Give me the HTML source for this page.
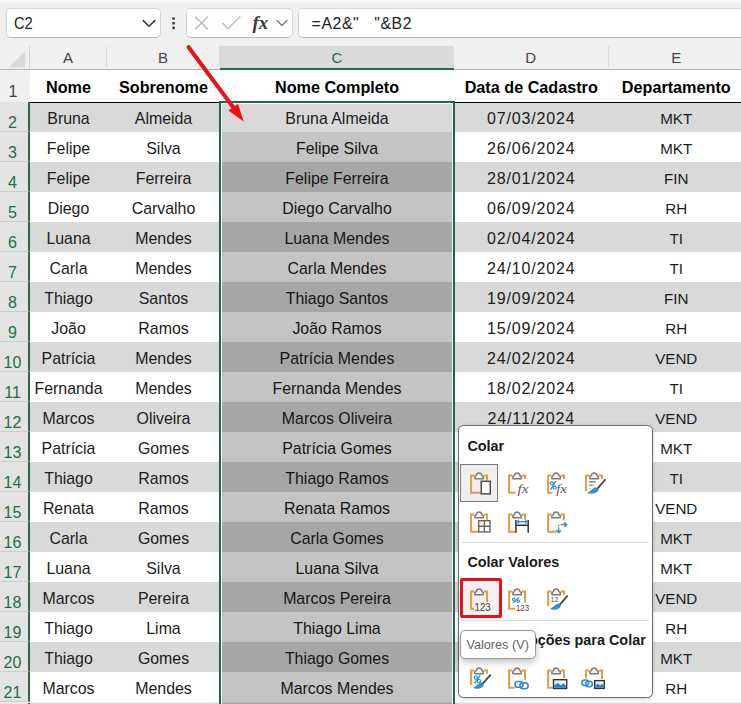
<!DOCTYPE html>
<html lang="pt-BR"><head><meta charset="utf-8"><title>Excel - Colar Valores</title>
<style>
*{box-sizing:border-box;margin:0;padding:0}
html,body{width:741px;height:704px;overflow:hidden;background:#f0f0f0;font-family:"Liberation Sans",sans-serif;color:#1a1a1a}
#app{position:relative;width:741px;height:704px;overflow:hidden;background:#f0f0f0}
.abs{position:absolute}
.topfade{left:0;top:0;width:741px;height:4px;background:linear-gradient(#fafafa,#f0f0f0)}
.fbox{position:absolute;top:8px;height:30px;background:#fff;border:1px solid #d6d6d6;border-bottom-color:#b9b9b9;border-radius:5px}
.namebox{left:6px;width:155px}
.namebox span{position:absolute;left:6.6px;top:0;line-height:29px;font-size:16.6px;color:#222;transform:scaleX(.885);transform-origin:0 50%}
.btnbox{left:186px;width:107px}
.formula{left:298px;width:460px}
.formula span{position:absolute;left:12.6px;top:0;line-height:29px;font-size:15.8px;color:#222;white-space:pre;letter-spacing:.6px}
.colhead{position:absolute;top:46px;height:24px;font-size:15px;line-height:24px;text-align:center;color:#444;border-bottom:1px solid #b4b4b4;border-right:1px solid #dbdbdb;background:#f0f0f0}
.colhead.sel{background:#dadada;color:#1f6e43;border-bottom:2px solid #2a6a47;border-right:none}
.rowhead{position:absolute;left:0;width:30px;font-size:16px;text-align:center;color:#444;background:#f0f0f0;border-bottom:1px solid #cdcdcd;padding-right:4px}
.rowhead.sel{background:#e3e3e3;color:#1f6e43;border-right:2px solid #2a6a47;padding-right:3px;width:30px}
.row{position:absolute;left:30px;width:711px;height:30px;background:#fff}
.row.g{background:#d9d9d9}
.cell{position:absolute;top:2px;height:30px;line-height:30px;font-size:15.9px;text-align:center;white-space:nowrap;color:#1c1c1c}
.cell.d{font-size:16px;letter-spacing:.85px}
.cell.e{font-size:15.2px}
.hdr .cell{font-weight:bold;font-size:16.2px;letter-spacing:0;color:#000;line-height:34.5px;height:33px;top:0}
.selov{position:absolute;background:rgba(0,0,0,.23)}
</style></head><body><div id="app">
<div class="abs topfade"></div>

<div class="fbox namebox"><span>C2</span>
<svg class="abs" style="left:134px;top:8px" width="16" height="12" viewBox="0 0 16 12"><path d="M2.2 3.6 L8 9.2 L13.8 3.6" fill="none" stroke="#333" stroke-width="1.5" stroke-linecap="round" stroke-linejoin="round"/></svg></div>
<svg class="abs" style="left:170px;top:15px" width="8" height="16" viewBox="0 0 8 16"><g fill="#444"><rect x="2.3" y="2.2" width="2.6" height="2.6" rx=".6"/><rect x="2.3" y="6.9" width="2.6" height="2.6" rx=".6"/><rect x="2.3" y="11.6" width="2.6" height="2.6" rx=".6"/></g></svg>
<div class="fbox btnbox">
<svg class="abs" style="left:0;top:0" width="105" height="28" viewBox="0 0 105 28">
<path d="M8.5 8 L20.5 20 M20.5 8 L8.5 20" stroke="#b8b8b8" stroke-width="1.3" fill="none" stroke-linecap="round"/>
<path d="M36 14.5 L41 19.8 L53 7.6" stroke="#b8b8b8" stroke-width="1.3" fill="none" stroke-linecap="round" stroke-linejoin="round"/>
<text x="65.5" y="20" font-family="Liberation Serif, serif" font-style="italic" font-weight="bold" font-size="19" fill="#3a3a3a">fx</text>
<path d="M90 11.5 L95 16.5 L100 11.5" stroke="#777" stroke-width="1.2" fill="none" stroke-linecap="round" stroke-linejoin="round"/>
</svg></div>
<div class="fbox formula"><span>=A2&amp;"   "&amp;B2</span></div>

<div class="abs" style="left:0;top:46px;width:30px;height:24px;border-bottom:1px solid #b4b4b4;border-right:1px solid #d0d0d0"><svg class="abs" style="left:9px;top:5px" width="17" height="17" viewBox="0 0 17 17"><path d="M16.3 0 V16.3 H0 Z" fill="#d9d9d9"/></svg></div>
<div class="colhead" style="left:30px;width:77px">A</div>
<div class="colhead" style="left:107px;width:113px">B</div>
<div class="colhead sel" style="left:220px;width:234px">C</div>
<div class="colhead" style="left:454px;width:154.5px">D</div>
<div class="colhead" style="left:608.5px;width:136.5px">E</div>
<div class="rowhead" style="top:70px;height:33px;line-height:44px">1</div>
<div class="row hdr" style="top:70px;height:33px;border-bottom:1px solid #000;z-index:2">
<div class="cell" style="left:0px;width:77px">Nome</div>
<div class="cell" style="left:77px;width:113px">Sobrenome</div>
<div class="cell" style="left:190px;width:234px">Nome Completo</div>
<div class="cell" style="left:424px;width:154.5px">Data de Cadastro</div>
<div class="cell" style="left:578.5px;width:135.5px">Departamento</div>
</div>
<div class="rowhead sel" style="top:102px;height:30px;line-height:41px">2</div>
<div class="row g" style="top:102px">
<div class="cell" style="left:0px;width:77px">Bruna</div>
<div class="cell" style="left:77px;width:113px">Almeida</div>
<div class="cell" style="left:190px;width:234px">Bruna Almeida</div>
<div class="cell d" style="left:424px;width:154.5px">07/03/2024</div>
<div class="cell e" style="left:578.5px;width:135.5px">MKT</div>
</div>
<div class="rowhead sel" style="top:132px;height:30px;line-height:41px">3</div>
<div class="row" style="top:132px">
<div class="cell" style="left:0px;width:77px">Felipe</div>
<div class="cell" style="left:77px;width:113px">Silva</div>
<div class="cell" style="left:190px;width:234px">Felipe Silva</div>
<div class="cell d" style="left:424px;width:154.5px">26/06/2024</div>
<div class="cell e" style="left:578.5px;width:135.5px">MKT</div>
</div>
<div class="rowhead sel" style="top:162px;height:30px;line-height:41px">4</div>
<div class="row g" style="top:162px">
<div class="cell" style="left:0px;width:77px">Felipe</div>
<div class="cell" style="left:77px;width:113px">Ferreira</div>
<div class="cell" style="left:190px;width:234px">Felipe Ferreira</div>
<div class="cell d" style="left:424px;width:154.5px">28/01/2024</div>
<div class="cell e" style="left:578.5px;width:135.5px">FIN</div>
</div>
<div class="rowhead sel" style="top:192px;height:30px;line-height:41px">5</div>
<div class="row" style="top:192px">
<div class="cell" style="left:0px;width:77px">Diego</div>
<div class="cell" style="left:77px;width:113px">Carvalho</div>
<div class="cell" style="left:190px;width:234px">Diego Carvalho</div>
<div class="cell d" style="left:424px;width:154.5px">06/09/2024</div>
<div class="cell e" style="left:578.5px;width:135.5px">RH</div>
</div>
<div class="rowhead sel" style="top:222px;height:30px;line-height:41px">6</div>
<div class="row g" style="top:222px">
<div class="cell" style="left:0px;width:77px">Luana</div>
<div class="cell" style="left:77px;width:113px">Mendes</div>
<div class="cell" style="left:190px;width:234px">Luana Mendes</div>
<div class="cell d" style="left:424px;width:154.5px">02/04/2024</div>
<div class="cell e" style="left:578.5px;width:135.5px">TI</div>
</div>
<div class="rowhead sel" style="top:252px;height:30px;line-height:41px">7</div>
<div class="row" style="top:252px">
<div class="cell" style="left:0px;width:77px">Carla</div>
<div class="cell" style="left:77px;width:113px">Mendes</div>
<div class="cell" style="left:190px;width:234px">Carla Mendes</div>
<div class="cell d" style="left:424px;width:154.5px">24/10/2024</div>
<div class="cell e" style="left:578.5px;width:135.5px">TI</div>
</div>
<div class="rowhead sel" style="top:282px;height:30px;line-height:41px">8</div>
<div class="row g" style="top:282px">
<div class="cell" style="left:0px;width:77px">Thiago</div>
<div class="cell" style="left:77px;width:113px">Santos</div>
<div class="cell" style="left:190px;width:234px">Thiago Santos</div>
<div class="cell d" style="left:424px;width:154.5px">19/09/2024</div>
<div class="cell e" style="left:578.5px;width:135.5px">FIN</div>
</div>
<div class="rowhead sel" style="top:312px;height:30px;line-height:41px">9</div>
<div class="row" style="top:312px">
<div class="cell" style="left:0px;width:77px">João</div>
<div class="cell" style="left:77px;width:113px">Ramos</div>
<div class="cell" style="left:190px;width:234px">João Ramos</div>
<div class="cell d" style="left:424px;width:154.5px">15/09/2024</div>
<div class="cell e" style="left:578.5px;width:135.5px">RH</div>
</div>
<div class="rowhead sel" style="top:342px;height:30px;line-height:41px">10</div>
<div class="row g" style="top:342px">
<div class="cell" style="left:0px;width:77px">Patrícia</div>
<div class="cell" style="left:77px;width:113px">Mendes</div>
<div class="cell" style="left:190px;width:234px">Patrícia Mendes</div>
<div class="cell d" style="left:424px;width:154.5px">24/02/2024</div>
<div class="cell e" style="left:578.5px;width:135.5px">VEND</div>
</div>
<div class="rowhead sel" style="top:372px;height:30px;line-height:41px">11</div>
<div class="row" style="top:372px">
<div class="cell" style="left:0px;width:77px">Fernanda</div>
<div class="cell" style="left:77px;width:113px">Mendes</div>
<div class="cell" style="left:190px;width:234px">Fernanda Mendes</div>
<div class="cell d" style="left:424px;width:154.5px">18/02/2024</div>
<div class="cell e" style="left:578.5px;width:135.5px">TI</div>
</div>
<div class="rowhead sel" style="top:402px;height:30px;line-height:41px">12</div>
<div class="row g" style="top:402px">
<div class="cell" style="left:0px;width:77px">Marcos</div>
<div class="cell" style="left:77px;width:113px">Oliveira</div>
<div class="cell" style="left:190px;width:234px">Marcos Oliveira</div>
<div class="cell d" style="left:424px;width:154.5px">24/11/2024</div>
<div class="cell e" style="left:578.5px;width:135.5px">VEND</div>
</div>
<div class="rowhead sel" style="top:432px;height:30px;line-height:41px">13</div>
<div class="row" style="top:432px">
<div class="cell" style="left:0px;width:77px">Patrícia</div>
<div class="cell" style="left:77px;width:113px">Gomes</div>
<div class="cell" style="left:190px;width:234px">Patrícia Gomes</div>
<div class="cell d" style="left:424px;width:154.5px"></div>
<div class="cell e" style="left:578.5px;width:135.5px">MKT</div>
</div>
<div class="rowhead sel" style="top:462px;height:30px;line-height:41px">14</div>
<div class="row g" style="top:462px">
<div class="cell" style="left:0px;width:77px">Thiago</div>
<div class="cell" style="left:77px;width:113px">Ramos</div>
<div class="cell" style="left:190px;width:234px">Thiago Ramos</div>
<div class="cell d" style="left:424px;width:154.5px"></div>
<div class="cell e" style="left:578.5px;width:135.5px">TI</div>
</div>
<div class="rowhead sel" style="top:492px;height:30px;line-height:41px">15</div>
<div class="row" style="top:492px">
<div class="cell" style="left:0px;width:77px">Renata</div>
<div class="cell" style="left:77px;width:113px">Ramos</div>
<div class="cell" style="left:190px;width:234px">Renata Ramos</div>
<div class="cell d" style="left:424px;width:154.5px"></div>
<div class="cell e" style="left:578.5px;width:135.5px">VEND</div>
</div>
<div class="rowhead sel" style="top:522px;height:30px;line-height:41px">16</div>
<div class="row g" style="top:522px">
<div class="cell" style="left:0px;width:77px">Carla</div>
<div class="cell" style="left:77px;width:113px">Gomes</div>
<div class="cell" style="left:190px;width:234px">Carla Gomes</div>
<div class="cell d" style="left:424px;width:154.5px"></div>
<div class="cell e" style="left:578.5px;width:135.5px">MKT</div>
</div>
<div class="rowhead sel" style="top:552px;height:30px;line-height:41px">17</div>
<div class="row" style="top:552px">
<div class="cell" style="left:0px;width:77px">Luana</div>
<div class="cell" style="left:77px;width:113px">Silva</div>
<div class="cell" style="left:190px;width:234px">Luana Silva</div>
<div class="cell d" style="left:424px;width:154.5px"></div>
<div class="cell e" style="left:578.5px;width:135.5px">MKT</div>
</div>
<div class="rowhead sel" style="top:582px;height:30px;line-height:41px">18</div>
<div class="row g" style="top:582px">
<div class="cell" style="left:0px;width:77px">Marcos</div>
<div class="cell" style="left:77px;width:113px">Pereira</div>
<div class="cell" style="left:190px;width:234px">Marcos Pereira</div>
<div class="cell d" style="left:424px;width:154.5px"></div>
<div class="cell e" style="left:578.5px;width:135.5px">VEND</div>
</div>
<div class="rowhead sel" style="top:612px;height:30px;line-height:41px">19</div>
<div class="row" style="top:612px">
<div class="cell" style="left:0px;width:77px">Thiago</div>
<div class="cell" style="left:77px;width:113px">Lima</div>
<div class="cell" style="left:190px;width:234px">Thiago Lima</div>
<div class="cell d" style="left:424px;width:154.5px"></div>
<div class="cell e" style="left:578.5px;width:135.5px">RH</div>
</div>
<div class="rowhead sel" style="top:642px;height:30px;line-height:41px">20</div>
<div class="row g" style="top:642px">
<div class="cell" style="left:0px;width:77px">Thiago</div>
<div class="cell" style="left:77px;width:113px">Gomes</div>
<div class="cell" style="left:190px;width:234px">Thiago Gomes</div>
<div class="cell d" style="left:424px;width:154.5px"></div>
<div class="cell e" style="left:578.5px;width:135.5px">MKT</div>
</div>
<div class="rowhead sel" style="top:672px;height:30px;line-height:41px">21</div>
<div class="row" style="top:672px">
<div class="cell" style="left:0px;width:77px">Marcos</div>
<div class="cell" style="left:77px;width:113px">Mendes</div>
<div class="cell" style="left:190px;width:234px">Marcos Mendes</div>
<div class="cell d" style="left:424px;width:154.5px"></div>
<div class="cell e" style="left:578.5px;width:135.5px">RH</div>
</div>
<div class="row g" style="top:703px;height:2px"></div><div class="rowhead sel" style="top:703px;height:2px"></div>
<div class="selov" style="left:222px;top:132px;width:231px;height:572px"></div>
<div class="abs" style="left:219px;top:101px;width:236px;height:610px;z-index:3;border:2px solid #2a6344;box-shadow:inset 0 0 0 1px rgba(255,255,255,.88)"></div>
<svg class="abs" style="left:0;top:0;z-index:5" width="741" height="704" viewBox="0 0 741 704"><line x1="188.6" y1="47.2" x2="233" y2="107" stroke="#e8131c" stroke-width="4" stroke-linecap="round"/><path d="M243.7 121.4 L228.3 110.4 L238 103.9 Z" fill="#f00f14"/></svg>
<div id="popup" style="position:absolute;z-index:6;left:458px;top:425px;width:195px;height:273px;background:#fff;border:1px solid #6e6e6e;border-radius:5.5px;box-shadow:0 1px 4px rgba(0,0,0,.18)">
<div style="position:absolute;left:8.4px;font-weight:bold;font-size:14.4px;line-height:16px;color:#1a1a1a;white-space:nowrap;top:11.5px">Colar</div>
<div style="position:absolute;left:8.4px;font-weight:bold;font-size:14.4px;line-height:16px;color:#1a1a1a;white-space:nowrap;top:127.9px">Colar Valores</div>
<div style="position:absolute;left:8.4px;font-weight:bold;font-size:14.4px;line-height:16px;color:#1a1a1a;white-space:nowrap;top:206.4px">Outras Opções para Colar</div>
<div style="position:absolute;left:3px;right:3px;top:115.5px;height:1px;background:#dcdcdc"></div>
<div style="position:absolute;left:3px;right:3px;top:193.5px;height:1px;background:#dcdcdc"></div>
<div style="position:absolute;left:1.2px;top:38.2px;width:38px;height:38px;background:#efefef;border:1px solid #7d7d7d"></div>
<div style="position:absolute;left:1.4px;top:152.4px;width:41.3px;height:39.6px;background:#f1f1f1;border:3.2px solid #e8101a;border-radius:2px"></div>
<svg style="position:absolute;left:1.2px;top:38.2px" width="38" height="38" viewBox="0 0 38 38"><g transform="translate(.6,.3)"><path d="M13.8 11.2 H10.5 V28.4 H20.0 M23.2 11.2 H26.4 V16.2" fill="none" stroke="#e39a45" stroke-width="2"/><path d="M14.3 14.5 V12.2 C15.4 12.1 15.7 11.6 15.8 10.9 A2.75 2.75 0 0 1 21.2 10.9 C21.3 11.6 21.6 12.1 22.7 12.2 V14.5 Z" fill="#f4f4f4" stroke="#7b7b7b" stroke-width="1.5" stroke-linejoin="round"/></g><rect x="21.2" y="17.3" width="9.1" height="12.6" fill="#fbfbfb" stroke="#444" stroke-width="1.4"/></svg>
<svg style="position:absolute;left:39.4px;top:38.2px" width="38" height="38" viewBox="0 0 38 38"><g transform="translate(.6,.3)"><path d="M13.8 11.2 H10.5 V28.4 H16.8 M23.2 11.2 H26.4 V14.6" fill="none" stroke="#e39a45" stroke-width="2"/><path d="M14.3 14.5 V12.2 C15.4 12.1 15.7 11.6 15.8 10.9 A2.75 2.75 0 0 1 21.2 10.9 C21.3 11.6 21.6 12.1 22.7 12.2 V14.5 Z" fill="#f4f4f4" stroke="#7b7b7b" stroke-width="1.5" stroke-linejoin="round"/></g><text x="19.6" y="28.6" font-family="Liberation Serif, serif" font-style="italic" font-size="13.2" fill="#5a5a5a" textLength="11" lengthAdjust="spacingAndGlyphs">fx</text></svg>
<svg style="position:absolute;left:77.6px;top:38.2px" width="38" height="38" viewBox="0 0 38 38"><g transform="translate(.6,.3)"><path d="M13.8 11.2 H10.5 V28.4 H14.8 M23.2 11.2 H26.4 V14.6" fill="none" stroke="#e39a45" stroke-width="2"/><path d="M14.3 14.5 V12.2 C15.4 12.1 15.7 11.6 15.8 10.9 A2.75 2.75 0 0 1 21.2 10.9 C21.3 11.6 21.6 12.1 22.7 12.2 V14.5 Z" fill="#f4f4f4" stroke="#7b7b7b" stroke-width="1.5" stroke-linejoin="round"/></g><g fill="none" stroke="#2f8fd3" stroke-width="1.2"><circle cx="14.74" cy="19.34" r="1.54"/><circle cx="17.66" cy="23.66" r="1.54"/><path d="M18.90 17.20 L13.50 25.80" stroke-width="1.3"/></g><text x="19.2" y="28.6" font-family="Liberation Serif, serif" font-style="italic" font-size="13.2" fill="#5a5a5a" textLength="10.6" lengthAdjust="spacingAndGlyphs">fx</text></svg>
<svg style="position:absolute;left:115.8px;top:38.2px" width="38" height="38" viewBox="0 0 38 38"><g transform="translate(.6,.3)"><path d="M13.8 11.2 H10.5 V27.0 M23.2 11.2 H26.4 V15.0" fill="none" stroke="#e39a45" stroke-width="2"/><path d="M14.3 14.5 V12.2 C15.4 12.1 15.7 11.6 15.8 10.9 A2.75 2.75 0 0 1 21.2 10.9 C21.3 11.6 21.6 12.1 22.7 12.2 V14.5 Z" fill="#f4f4f4" stroke="#7b7b7b" stroke-width="1.5" stroke-linejoin="round"/></g><path d="M13.8 17.8 H20.8" stroke="#2f8fd3" stroke-width="1.4"/><path d="M13.8 21.3 H18.4" stroke="#c9739a" stroke-width="1.4"/><path d="M13.8 24.7 H16.2" stroke="#e7b98a" stroke-width="1.3"/><path d="M30.0 15.8 L22.4 24.6" stroke="#4a4a4a" stroke-width="1.9" stroke-linecap="round"/><path d="M21.1 23.3 C17.9 23.8 17.4 26.1 12.4 28.9 C15.9 30.5 21.2 29.9 23.8 26.0 Z" fill="#2f8fd3"/></svg>
<svg style="position:absolute;left:1.2px;top:76.8px" width="38" height="38" viewBox="0 0 38 38"><g transform="translate(.6,.3)"><path d="M13.8 11.2 H10.5 V28.4 H18 M23.2 11.2 H26.4 V16.4" fill="none" stroke="#e39a45" stroke-width="2"/><path d="M14.3 14.5 V12.2 C15.4 12.1 15.7 11.6 15.8 10.9 A2.75 2.75 0 0 1 21.2 10.9 C21.3 11.6 21.6 12.1 22.7 12.2 V14.5 Z" fill="#f4f4f4" stroke="#7b7b7b" stroke-width="1.5" stroke-linejoin="round"/></g><rect x="18.7" y="17.7" width="11.3" height="11.2" fill="#fff" stroke="#666" stroke-width="1.4"/><path d="M24.35 17.7 V28.9 M18.7 23.3 H30" stroke="#666" stroke-width="1.4"/></svg>
<svg style="position:absolute;left:39.4px;top:76.8px" width="38" height="38" viewBox="0 0 38 38"><g transform="translate(.6,.3)"><path d="M13.8 11.2 H10.5 V28.4 H17 M23.2 11.2 H26.4 V16.4" fill="none" stroke="#e39a45" stroke-width="2"/><path d="M14.3 14.5 V12.2 C15.4 12.1 15.7 11.6 15.8 10.9 A2.75 2.75 0 0 1 21.2 10.9 C21.3 11.6 21.6 12.1 22.7 12.2 V14.5 Z" fill="#f4f4f4" stroke="#7b7b7b" stroke-width="1.5" stroke-linejoin="round"/></g><path d="M17.9 17 V29.8 M30.2 17 V29.8 M17.9 22.3 H30.2" stroke="#333" stroke-width="1.5" fill="none"/><path d="M19.4 18.7 H28.7" stroke="#2f8fd3" stroke-width="1.4"/><path d="M21 16.9 L19.2 18.7 L21 20.5 M27.1 16.9 L28.9 18.7 L27.1 20.5" fill="none" stroke="#2f8fd3" stroke-width="1.2"/></svg>
<svg style="position:absolute;left:77.6px;top:76.8px" width="38" height="38" viewBox="0 0 38 38"><g transform="translate(.6,.3)"><path d="M13.8 11.2 H10.5 V28.4 H18.5 M23.2 11.2 H26.4 V17" fill="none" stroke="#e39a45" stroke-width="2"/><path d="M14.3 14.5 V12.2 C15.4 12.1 15.7 11.6 15.8 10.9 A2.75 2.75 0 0 1 21.2 10.9 C21.3 11.6 21.6 12.1 22.7 12.2 V14.5 Z" fill="#f4f4f4" stroke="#7b7b7b" stroke-width="1.5" stroke-linejoin="round"/></g><path d="M21.6 29 V25.2 M24.4 21.6 H29" fill="none" stroke="#2f8fd3" stroke-width="1.5"/><path d="M21.6 25.6 V23.4 Q21.6 21.6 23.4 21.6 H24.6" fill="none" stroke="#2f8fd3" stroke-width="1.2" stroke-dasharray="1.4 1"/><path d="M19.3 27.2 L21.6 29.6 L23.9 27.2" fill="none" stroke="#2f8fd3" stroke-width="1.5"/><path d="M27.3 19.3 L29.7 21.6 L27.3 23.9" fill="none" stroke="#2f8fd3" stroke-width="1.5"/></svg>
<svg style="position:absolute;left:1.2px;top:154.1px" width="38" height="38" viewBox="0 0 38 38"><g transform="translate(.6,.3)"><path d="M13.8 11.2 H10.5 V28.4 H13.6 M23.2 11.2 H26.4 V22.0" fill="none" stroke="#e39a45" stroke-width="2"/><path d="M14.3 14.5 V12.2 C15.4 12.1 15.7 11.6 15.8 10.9 A2.75 2.75 0 0 1 21.2 10.9 C21.3 11.6 21.6 12.1 22.7 12.2 V14.5 Z" fill="#f4f4f4" stroke="#7b7b7b" stroke-width="1.5" stroke-linejoin="round"/></g><text x="14.5" y="30.6" font-family="Liberation Sans, sans-serif" font-size="10.6" fill="#444" textLength="16.2" lengthAdjust="spacingAndGlyphs">123</text></svg>
<svg style="position:absolute;left:39.4px;top:154.1px" width="38" height="38" viewBox="0 0 38 38"><g transform="translate(.6,.3)"><path d="M13.8 11.2 H10.5 V28.4 H16.5 M23.2 11.2 H26.4 V22.0" fill="none" stroke="#e39a45" stroke-width="2"/><path d="M14.3 14.5 V12.2 C15.4 12.1 15.7 11.6 15.8 10.9 A2.75 2.75 0 0 1 21.2 10.9 C21.3 11.6 21.6 12.1 22.7 12.2 V14.5 Z" fill="#f4f4f4" stroke="#7b7b7b" stroke-width="1.5" stroke-linejoin="round"/></g><g fill="none" stroke="#2f8fd3" stroke-width="1.15"><circle cx="15.70" cy="19.19" r="1.22"/><circle cx="20.31" cy="21.21" r="1.22"/><path d="M21.20 17.40 L14.80 23.00" stroke-width="1.25"/></g><text x="17.9" y="30.8" font-family="Liberation Sans, sans-serif" font-size="9.8" fill="#444" textLength="13.2" lengthAdjust="spacingAndGlyphs">123</text></svg>
<svg style="position:absolute;left:77.6px;top:154.1px" width="38" height="38" viewBox="0 0 38 38"><g transform="translate(.6,.3)"><path d="M13.8 11.2 H10.5 V25.8 M23.2 11.2 H26.4 V14.4" fill="none" stroke="#e39a45" stroke-width="2"/><path d="M14.3 14.5 V12.2 C15.4 12.1 15.7 11.6 15.8 10.9 A2.75 2.75 0 0 1 21.2 10.9 C21.3 11.6 21.6 12.1 22.7 12.2 V14.5 Z" fill="#f4f4f4" stroke="#7b7b7b" stroke-width="1.5" stroke-linejoin="round"/></g><text x="13.8" y="21.6" font-family="Liberation Sans, sans-serif" font-size="6.6" fill="#444" textLength="7.4" lengthAdjust="spacingAndGlyphs">12</text><path d="M30.2 16.1 L22.6 24.8" stroke="#4a4a4a" stroke-width="1.9" stroke-linecap="round"/><path d="M21.3 23.5 C18.1 24.0 17.9 26.2 12.9 29.0 C16.4 30.6 21.4 30.0 24.0 26.2 Z" fill="#2f8fd3"/></svg>
<svg style="position:absolute;left:1.2px;top:232.7px" width="38" height="38" viewBox="0 0 38 38"><g transform="translate(.6,.3)"><path d="M13.8 11.2 H10.5 V25.8 M23.2 11.2 H26.4 V14.4" fill="none" stroke="#e39a45" stroke-width="2"/><path d="M14.3 14.5 V12.2 C15.4 12.1 15.7 11.6 15.8 10.9 A2.75 2.75 0 0 1 21.2 10.9 C21.3 11.6 21.6 12.1 22.7 12.2 V14.5 Z" fill="#f4f4f4" stroke="#7b7b7b" stroke-width="1.5" stroke-linejoin="round"/></g><g fill="none" stroke="#2f8fd3" stroke-width="1.2"><circle cx="15.82" cy="18.62" r="1.62"/><circle cx="18.98" cy="21.98" r="1.62"/><path d="M20.30 16.40 L14.50 24.20" stroke-width="1.3"/></g><path d="M30.2 16.1 L22.6 24.8" stroke="#4a4a4a" stroke-width="1.9" stroke-linecap="round"/><path d="M21.3 23.5 C18.1 24.0 17.9 26.2 12.9 29.0 C16.4 30.6 21.4 30.0 24.0 26.2 Z" fill="#2f8fd3"/></svg>
<svg style="position:absolute;left:39.4px;top:232.7px" width="38" height="38" viewBox="0 0 38 38"><g transform="translate(.6,.3)"><path d="M13.8 11.2 H10.5 V28.4 H16 M23.2 11.2 H26.4 V21" fill="none" stroke="#e39a45" stroke-width="2"/><path d="M14.3 14.5 V12.2 C15.4 12.1 15.7 11.6 15.8 10.9 A2.75 2.75 0 0 1 21.2 10.9 C21.3 11.6 21.6 12.1 22.7 12.2 V14.5 Z" fill="#f4f4f4" stroke="#7b7b7b" stroke-width="1.5" stroke-linejoin="round"/></g><g fill="none" stroke="#2f8fd3" stroke-width="1.6"><rect x="17.00" y="22.50" width="8.23" height="5.81" rx="2.90"/><rect x="21.87" y="23.89" width="8.23" height="5.81" rx="2.90"/></g></svg>
<svg style="position:absolute;left:77.6px;top:232.7px" width="38" height="38" viewBox="0 0 38 38"><g transform="translate(.6,.3)"><path d="M13.8 11.2 H10.5 V28.4 H15.2 M23.2 11.2 H26.4 V18.6" fill="none" stroke="#e39a45" stroke-width="2"/><path d="M14.3 14.5 V12.2 C15.4 12.1 15.7 11.6 15.8 10.9 A2.75 2.75 0 0 1 21.2 10.9 C21.3 11.6 21.6 12.1 22.7 12.2 V14.5 Z" fill="#f4f4f4" stroke="#7b7b7b" stroke-width="1.5" stroke-linejoin="round"/></g><rect x="16.50" y="20.70" width="13.20" height="8.80" fill="#eef5fb" stroke="#333" stroke-width="1.4"/><path d="M17.20 28.80 V26.32 L20.62 23.88 L23.83 26.32 L26.60 24.28 L29.00 26.73 V28.80 Z" fill="#2f80c8"/></svg>
<svg style="position:absolute;left:115.8px;top:232.7px" width="38" height="38" viewBox="0 0 38 38"><g transform="translate(.6,.3)"><path d="M13.8 11.2 H10.5 V19.0 M23.2 11.2 H26.4 V19.6" fill="none" stroke="#e39a45" stroke-width="2"/><path d="M14.3 14.5 V12.2 C15.4 12.1 15.7 11.6 15.8 10.9 A2.75 2.75 0 0 1 21.2 10.9 C21.3 11.6 21.6 12.1 22.7 12.2 V14.5 Z" fill="#f4f4f4" stroke="#7b7b7b" stroke-width="1.5" stroke-linejoin="round"/></g><g fill="none" stroke="#2f8fd3" stroke-width="1.6"><rect x="6.80" y="21.00" width="6.83" height="5.54" rx="2.77"/><rect x="10.57" y="22.26" width="6.83" height="5.54" rx="2.77"/></g><rect x="19.70" y="21.60" width="9.60" height="7.80" fill="#eef5fb" stroke="#333" stroke-width="1.4"/><path d="M20.40 28.70 V26.60 L22.63 24.40 L25.05 26.60 L27.14 24.76 L28.60 26.97 V28.70 Z" fill="#2f80c8"/></svg>
<div style="position:absolute;left:1.2px;top:204.4px;width:75.5px;height:28.3px;background:#fff;border:1px solid #9a9a9a;border-radius:5px;box-shadow:0 3px 7px rgba(0,0,0,.25);font-size:12.7px;line-height:29.6px;color:#636363;padding-left:5.2px;white-space:nowrap">Valores (V)</div>
</div>
</div></body></html>
